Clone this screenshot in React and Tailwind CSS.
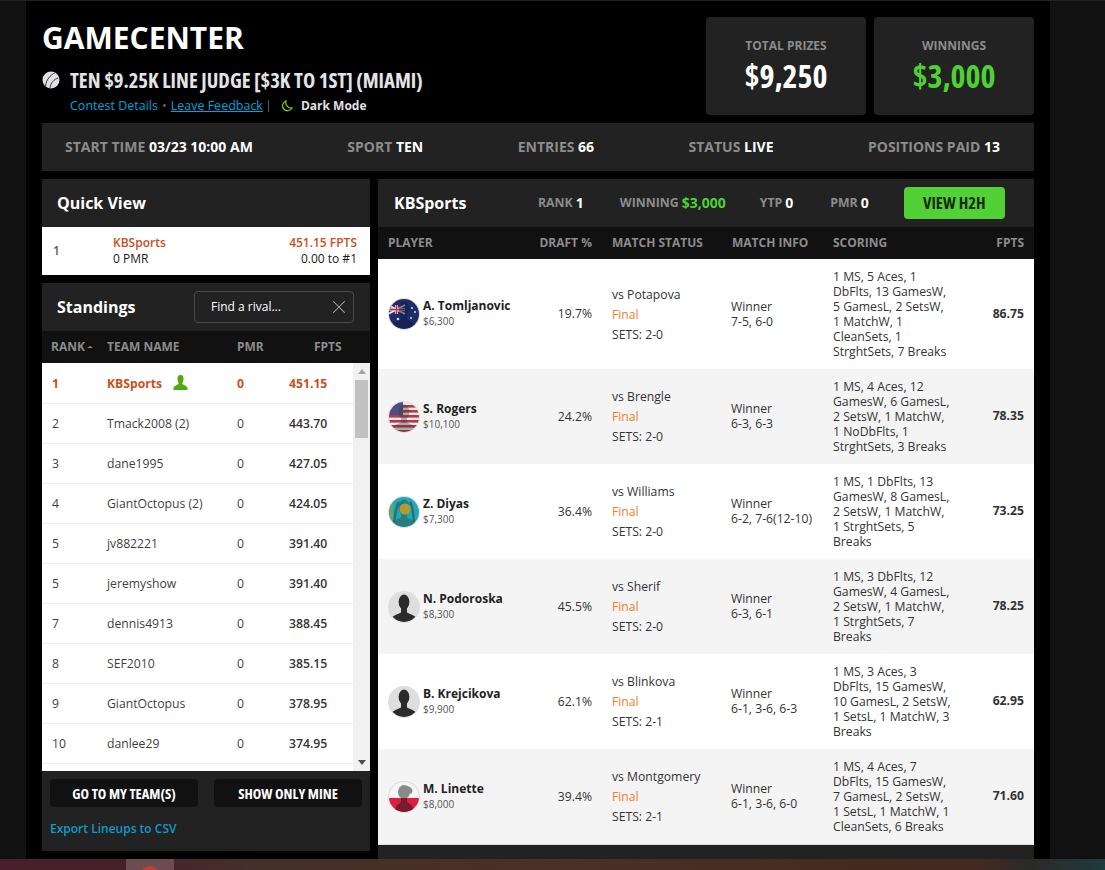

import React from 'react';
import { X } from 'lucide-react';

const SANS = "font-['Open_Sans','Noto_Sans',sans-serif]";
const COND = "[font-stretch:75%]";

const standings = [
  ['1','KBSports','0','451.15'],['2','Tmack2008 (2)','0','443.70'],['3','dane1995','0','427.05'],
  ['4','GiantOctopus (2)','0','424.05'],['5','jv882221','0','391.40'],['5','jeremyshow','0','391.40'],
  ['7','dennis4913','0','388.45'],['8','SEF2010','0','385.15'],['9','GiantOctopus','0','378.95'],['10','danlee29','0','374.95'],
];

const players = [
  { name:'A. Tomljanovic', sal:'$6,300', flag:'au', draft:'19.7%', vs:'vs Potapova', sets:'SETS: 2-0', info:'7-5, 6-0', score:['1 MS, 5 Aces, 1','DbFlts, 13 GamesW,','5 GamesL, 2 SetsW,','1 MatchW, 1','CleanSets, 1','StrghtSets, 7 Breaks'], fpts:'86.75' },
  { name:'S. Rogers', sal:'$10,100', flag:'us', draft:'24.2%', vs:'vs Brengle', sets:'SETS: 2-0', info:'6-3, 6-3', score:['1 MS, 4 Aces, 12','GamesW, 6 GamesL,','2 SetsW, 1 MatchW,','1 NoDbFlts, 1','StrghtSets, 3 Breaks'], fpts:'78.35' },
  { name:'Z. Diyas', sal:'$7,300', flag:'kz', draft:'36.4%', vs:'vs Williams', sets:'SETS: 2-0', info:'6-2, 7-6(12-10)', score:['1 MS, 1 DbFlts, 13','GamesW, 8 GamesL,','2 SetsW, 1 MatchW,','1 StrghtSets, 5','Breaks'], fpts:'73.25' },
  { name:'N. Podoroska', sal:'$8,300', flag:'none', draft:'45.5%', vs:'vs Sherif', sets:'SETS: 2-0', info:'6-3, 6-1', score:['1 MS, 3 DbFlts, 12','GamesW, 4 GamesL,','2 SetsW, 1 MatchW,','1 StrghtSets, 7','Breaks'], fpts:'78.25' },
  { name:'B. Krejcikova', sal:'$9,900', flag:'none', draft:'62.1%', vs:'vs Blinkova', sets:'SETS: 2-1', info:'6-1, 3-6, 6-3', score:['1 MS, 3 Aces, 3','DbFlts, 15 GamesW,','10 GamesL, 2 SetsW,','1 SetsL, 1 MatchW, 3','Breaks'], fpts:'62.95' },
  { name:'M. Linette', sal:'$8,000', flag:'pl', draft:'39.4%', vs:'vs Montgomery', sets:'SETS: 2-1', info:'6-1, 3-6, 6-0', score:['1 MS, 4 Aces, 7','DbFlts, 15 GamesW,','7 GamesL, 2 SetsW,','1 SetsL, 1 MatchW, 1','CleanSets, 6 Breaks'], fpts:'71.60' },
];

function Flag({ flag }) {
  const silhouette = (fill, op = 1) => (
    <g fill={fill} opacity={op}>
      <ellipse cx="16" cy="11" rx="5.4" ry="7.5" />
      <rect x="13" y="15" width="6" height="7" />
      <path d="M1 32 C2 25 9 23.5 13 21.5 L19 21.5 C23 23.5 30 25 31 32 Z" />
    </g>
  );
  return (
    <svg width="32" height="32" viewBox="0 0 32 32" className="shrink-0">
      <defs>
        <clipPath id={`clip-${flag}`}><circle cx="16" cy="16" r="15" /></clipPath>
      </defs>
      <circle cx="16" cy="16" r="16" fill="#dedede" />
      <g clipPath={`url(#clip-${flag})`}>
        {flag === 'au' && <g>
          <rect width="32" height="32" fill="#1e2c6b" />
          <rect x="0" y="7" width="17" height="9" fill="#2a3a7a" />
          <path d="M0 7 L17 16 M17 7 L0 16" stroke="#f3e9ea" strokeWidth="1.6" />
          <path d="M8.5 7 V16 M0 11.5 H17" stroke="#f3e9ea" strokeWidth="2.6" />
          <path d="M8.5 7 V16 M0 11.5 H17" stroke="#c8283f" strokeWidth="1.3" />
          {silhouette('#0f1a3f', 0.5)}
          <circle cx="24" cy="10" r="1" fill="#d9def0" /><circle cx="27" cy="14" r="1" fill="#d9def0" /><circle cx="23" cy="20" r="1" fill="#d9def0" /><circle cx="10" cy="21" r="1.3" fill="#d9def0" />
        </g>}
        {flag === 'us' && <g>
          <rect width="32" height="32" fill="#eeeaea" />
          {[4,9,14,19,24,29].map(y => <rect key={y} x="0" y={y} width="32" height="2.6" fill="#b5394a" />)}
          <rect width="15" height="14" fill="#4a4f85" />
          {silhouette('#3a3434', 0.35)}
        </g>}
        {flag === 'kz' && <g>
          <rect width="32" height="32" fill="#1fa9bd" />
          <rect x="0" y="0" width="5" height="32" fill="#8f9f4a" opacity="0.7" />
          {silhouette('#2f6f68', 0.75)}
          <circle cx="17" cy="13" r="5.5" fill="#b39a32" />
          <path d="M6 26 C8 16 8 10 11 6 M26 26 C25 16 25 10 22 6" stroke="#2f6f68" strokeWidth="2.4" fill="none" />
        </g>}
        {flag === 'none' && <g>
          <rect width="32" height="32" fill="#dedede" />
          {silhouette('#2b2b2b')}
        </g>}
        {flag === 'pl' && <g>
          <rect width="32" height="32" fill="#f6f6f6" />
          <rect y="17" width="32" height="15" fill="#dc1f41" />
          <ellipse cx="16" cy="11" rx="6" ry="7" fill="#8a8a8a" />
          <path d="M19 5 C24 6 26 10 23 13 L20 11 Z" fill="#8a8a8a" />
          <rect x="13" y="15" width="6" height="3" fill="#8a8a8a" />
          <rect x="13" y="17" width="6" height="5" fill="#7a1a2e" />
          <path d="M6 32 C7 25 11 23 13 21 L19 21 C22 23 26 25 27 32 Z" fill="#7a1a2e" />
        </g>}
      </g>
    </svg>
  );
}

function TennisBall() {
  return (
    <svg width="18" height="18" viewBox="0 0 18 18" className="shrink-0">
      <circle cx="9" cy="9" r="8.5" fill="#dfe1e4" />
      <path d="M13.5 1.5 C8 4 4 9 3.5 15.5 M16.5 7 C12 8 8.5 12 8 17" stroke="#3a3a3a" strokeWidth="1" fill="none" />
    </svg>
  );
}

function Stat({ label, value, cls = 'text-white' }) {
  return (
    <div className="text-sm font-bold whitespace-nowrap">
      <span className="text-[#8c8c8c]">{label} </span><span className={cls}>{value}</span>
    </div>
  );
}

function HeadStat({ label, value, cls = 'text-white', ml }) {
  return (
    <span className={`${ml} flex items-center gap-[3px] whitespace-nowrap font-bold`}>
      <span className="text-[12.3px] text-[#8c8c8c]">{label}</span>
      <span className={`text-sm ${cls}`}>{value}</span>
    </span>
  );
}

export default function App() {
  return (
    <div className={`${SANS} w-[1105px] h-[870px] overflow-hidden bg-[#111111] flex flex-col`}>
      <div className="h-px bg-[#222222] shrink-0" />
      <div className="w-[1024px] h-[858px] ml-[26px] bg-black px-4 shrink-0 overflow-hidden">
        <div className="flex justify-between pt-4 h-[114px]">
          <div>
            <h1 className="text-[30px] leading-10 font-bold text-white mt-px">GAMECENTER</h1>
            <div className="flex items-center gap-[10px] mt-[9px] h-[26px]">
              <TennisBall />
              <span className={`text-[20.6px] font-bold text-[#e3e4e6] whitespace-nowrap ${COND}`}>TEN $9.25K LINE JUDGE [$3K TO 1ST] (MIAMI)</span>
            </div>
            <div className="flex items-center ml-[28px] mt-[3px] text-[12.5px] h-5">
              <span className="text-[#00a3d9]">Contest Details</span>
              <span className="text-[#666] mx-[4px]">•</span>
              <span className="text-[#00a3d9] underline">Leave Feedback</span>
              <span className="w-px h-3 bg-[#555] ml-[5px]" />
              <svg width="12" height="12" viewBox="0 0 12 12" className="ml-[12px]" fill="none" stroke="#8ac200" strokeWidth="1.3"><path d="M5 1 A5 5 0 1 0 11 8 A5.5 5.5 0 0 1 5 1 Z" /></svg>
              <span className="text-[#e0e0e0] text-[12px] font-bold ml-[8px]">Dark Mode</span>
            </div>
          </div>
          <div className="flex gap-2">
            <div className="w-[160px] h-[98px] bg-[#222222] rounded-sm flex flex-col items-center pt-[21px]">
              <span className="text-[12px] leading-4 font-bold text-[#8c8c8c]">TOTAL PRIZES</span>
              <span className={`text-[32px] leading-10 mt-[2px] font-bold text-white ${COND}`}>$9,250</span>
            </div>
            <div className="w-[160px] h-[98px] bg-[#222222] rounded-sm flex flex-col items-center pt-[21px]">
              <span className="text-[12px] leading-4 font-bold text-[#8c8c8c]">WINNINGS</span>
              <span className={`text-[32px] leading-10 mt-[2px] font-bold text-[#4fd135] ${COND}`}>$3,000</span>
            </div>
          </div>
        </div>

        <div className="mt-2 h-12 bg-[#222222] flex items-center justify-between pl-[23px] pr-[34px]">
          <Stat label="START TIME" value="03/23 10:00 AM" />
          <Stat label="SPORT" value="TEN" />
          <Stat label="ENTRIES" value="66" />
          <Stat label="STATUS" value="LIVE" />
          <Stat label="POSITIONS PAID" value="13" />
        </div>

        <div className="flex gap-2 mt-2">
          <div className="w-[328px] shrink-0">
            <div className="h-12 bg-[#222222] flex items-center pl-[15px] text-base font-bold text-white">Quick View</div>
            <div className="h-12 bg-white flex items-center text-[12px] leading-4 pl-[11px] pr-[13px]">
              <span className="w-[60px] font-semibold text-[#55606b]">1</span>
              <div><div className="font-semibold text-[#c9501c]">KBSports</div><div className="text-[#1a1a1a]">0 PMR</div></div>
              <div className="ml-auto text-right"><div className="font-semibold text-[#c9501c]">451.15 FPTS</div><div className="text-[#1a1a1a]">0.00 to #1</div></div>
            </div>

            <div className="mt-2 bg-[#222222]">
              <div className="h-12 flex items-center justify-between pl-[15px] pr-4">
                <span className="text-base font-bold text-white">Standings</span>
                <div className="w-[160px] h-8 border border-[#4a4a4a] rounded-sm flex items-center justify-between pl-4 pr-[3px] text-[12px] text-white">
                  <span>Find a rival...</span>
                  <X size={22} className="text-[#aaaaaa]" strokeWidth={1.1} />
                </div>
              </div>
              <div className="h-8 bg-[#111111] flex items-center text-[12px] font-bold text-[#8c8c8c]">
                <span className="w-[65px] pl-[9px] flex items-center gap-[2px] whitespace-nowrap">RANK <span className="w-0 h-0 border-x-[3px] border-x-transparent border-b-[2px] border-b-[#8c8c8c]" /></span>
                <span className="w-[130px]">TEAM NAME</span>
                <span className="w-[77px]">PMR</span>
                <span>FPTS</span>
              </div>
              <div className="h-[408px] bg-white flex overflow-hidden">
                <div className="w-[311px] shrink-0">
                  {standings.map((r, i) => {
                    const me = i === 0;
                    const c = me ? 'text-[#c9501c] font-bold' : 'text-[#3f3f3f]';
                    return (
                      <div key={i} className={`h-10 pt-[2px] flex items-center text-[12.2px] border-b border-[#eeeeee] ${c} first:h-[41px]`}>
                        <span className="w-[65px] pl-[10px]">{r[0]}</span>
                        <span className="w-[130px] flex items-center whitespace-nowrap">{r[1]}
                          {me && <svg width="15" height="15" viewBox="0 0 14 15" className="ml-[11px] -mt-[2px]" fill="#55a80f"><path d="M7 0 C9.5 0 10.2 2 10 4.5 C9.8 6.5 9 7.5 8.8 8.6 C9 10 13 10.5 14 13 L14 15 L0 15 L0 13 C1 10.5 5 10 5.2 8.6 C5 7.5 4.2 6.5 4 4.5 C3.8 2 4.5 0 7 0 Z" /></svg>}
                        </span>
                        <span className="w-[52px]">{r[2]}</span>
                        <span className={me ? '' : 'font-semibold text-[#333333]'}>{r[3]}</span>
                      </div>
                    );
                  })}
                </div>
                <div className="w-[17px] bg-[#f1f1f1] flex flex-col items-center justify-between relative">
                  <span className="mt-[6px] w-0 h-0 border-x-[4px] border-x-transparent border-b-[5px] border-b-[#a3a3a3]" />
                  <span className="absolute top-[17px] left-[2px] w-[13px] h-[58px] bg-[#c1c1c1]" />
                  <span className="mb-[6px] w-0 h-0 border-x-[4px] border-x-transparent border-t-[5px] border-t-[#505050]" />
                </div>
              </div>
              <div className="h-20 px-2 pt-2">
                <div className="flex gap-4">
                  <div className={`w-[148px] h-7 pt-px bg-[#111111] rounded-sm flex items-center justify-center text-[14.4px] font-bold text-white ${COND}`}>GO TO MY TEAM(S)</div>
                  <div className={`w-[148px] h-7 pt-px bg-[#111111] rounded-sm flex items-center justify-center text-[14.4px] font-bold text-white ${COND}`}>SHOW ONLY MINE</div>
                </div>
                <div className="mt-[13px] text-[12px] font-semibold text-[#0f9ac9]">Export Lineups to CSV</div>
              </div>
            </div>
          </div>

          <div className="w-[656px] shrink-0 bg-[#222222] h-[680px]">
            <div className="h-12 flex items-center pl-4">
              <span className="w-[144px] text-base font-bold text-white">KBSports</span>
              <HeadStat label="RANK" value="1" ml="" />
              <HeadStat label="WINNING" value="$3,000" cls="text-[#4fd135]" ml="ml-[36px]" />
              <HeadStat label="YTP" value="0" ml="ml-[34px]" />
              <HeadStat label="PMR" value="0" ml="ml-[37px]" />
              <span className={`ml-[35px] w-[101px] h-8 rounded-sm bg-[#52d136] flex items-center justify-center text-[16.5px] font-bold text-[#1c2a14] ${COND}`}>VIEW H2H</span>
            </div>
            <div className="h-8 bg-[#111111] flex items-center text-[12px] font-bold text-[#8c8c8c]">
              <span className="w-[161px] pl-[10px]">PLAYER</span>
              <span className="w-[53px] text-right whitespace-nowrap">DRAFT %</span>
              <span className="w-[140px] pl-[20px] whitespace-nowrap">MATCH STATUS</span>
              <span className="w-[101px] whitespace-nowrap">MATCH INFO</span>
              <span className="w-[139px]">SCORING</span>
              <span className="w-[62px] text-right pr-[10px]">FPTS</span>
            </div>
            {players.map((p, i) => (
              <div key={p.name} className={`flex items-center text-[12.2px] text-[#333333] ${i % 2 ? 'bg-[#f4f4f4]' : 'bg-white'} ${i === 0 ? 'h-[110px]' : i === 5 ? 'h-[96px] border-b border-[#dddddd]' : 'h-[95px]'}`}>
                <div className="w-[161px] pl-[10px] flex items-center gap-[3px]">
                  <Flag flag={p.flag} />
                  <div className="pb-px text-[12px]">
                    <div className="leading-[16px] font-bold text-[#222222] whitespace-nowrap">{p.name}</div>
                    <div className="leading-[15px] text-[10px] text-[#555555]">{p.sal}</div>
                  </div>
                </div>
                <div className="w-[53px] text-right pt-px">{p.draft}</div>
                <div className="w-[140px] pl-[20px] pt-px leading-5">
                  <div className="whitespace-nowrap">{p.vs}</div>
                  <div className="text-[#f07f2a]">Final</div>
                  <div>{p.sets}</div>
                </div>
                <div className={`w-[101px] -ml-px mr-px leading-[15px] ${i === 0 ? '' : 'pb-[2px]'}`}><div>Winner</div><div className="whitespace-nowrap">{p.info}</div></div>
                <div className="w-[139px] leading-[15px]">{p.score.map(s => <div key={s} className="whitespace-nowrap">{s}</div>)}</div>
                <div className="w-[62px] text-right pr-[10px] font-bold">{p.fpts}</div>
              </div>
            ))}
          </div>
        </div>
      </div>
      <div className="h-[11px] shrink-0 flex bg-[linear-gradient(90deg,#4a1e2c_0%,#47202a_11%,#45302a_23%,#4a3026_50%,#452a20_80%,#452a22_88%,#2b2a26_93%,#1f3a40_100%)]">
        <div className="ml-[126px] w-[48px] h-full bg-[#6e4a52] flex justify-center"><span className="w-[18px] h-[18px] rounded-full bg-[#c4402d] mt-[7px]" /></div>
      </div>
    </div>
  );
}
